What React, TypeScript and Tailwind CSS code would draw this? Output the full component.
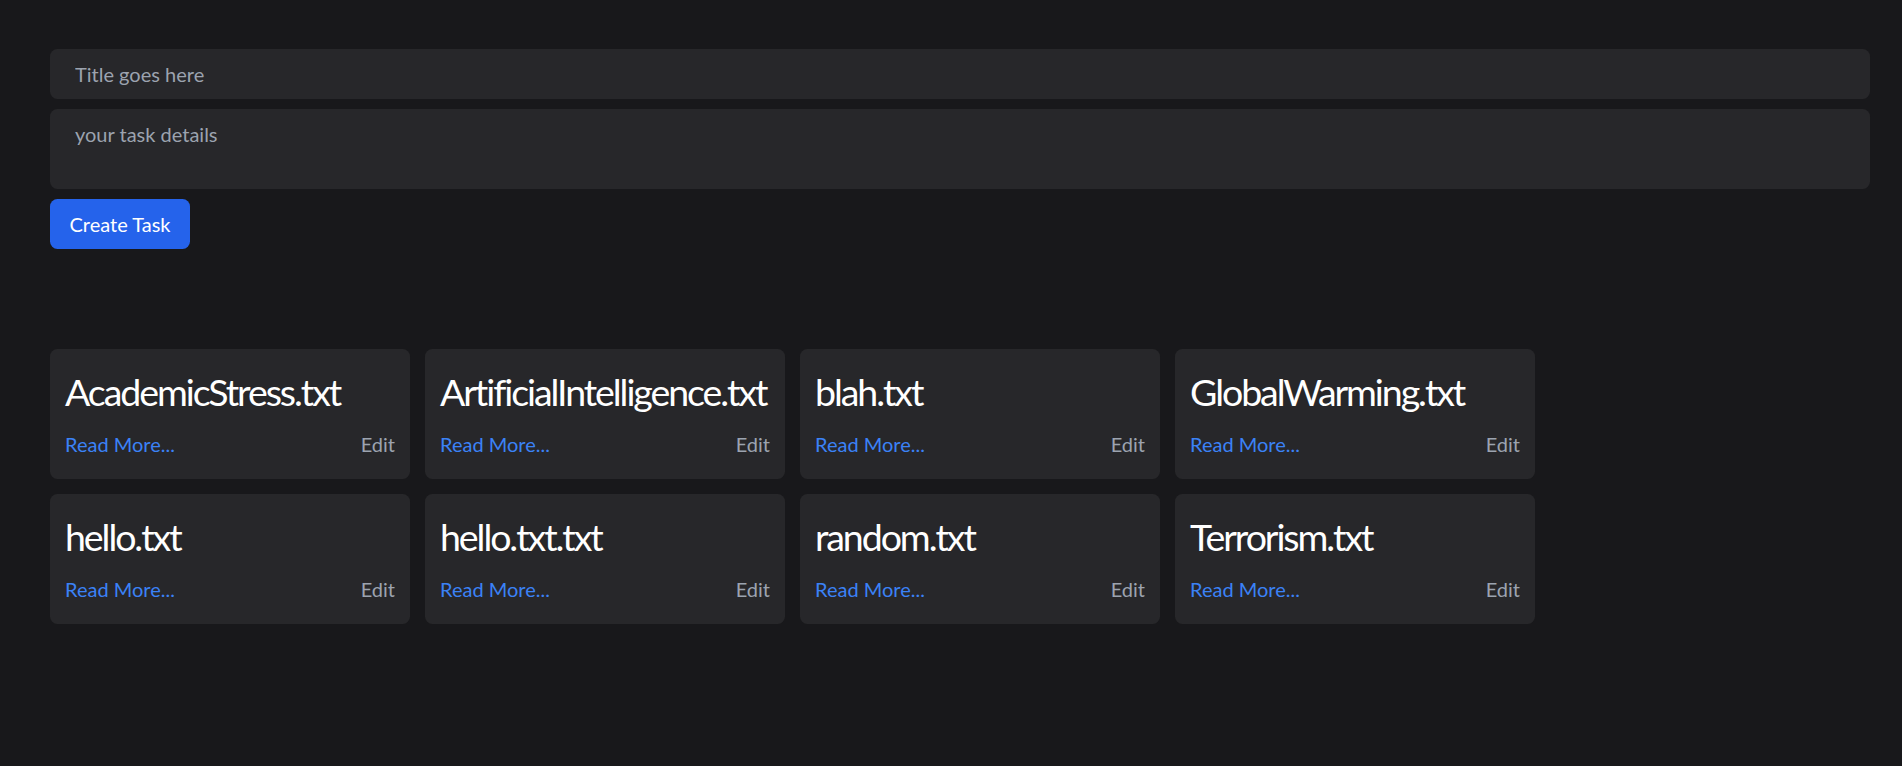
import React from "react";

type Task = {
  id: number;
  title: string;
};

const tasks: Task[] = [
  { id: 1, title: "AcademicStress.txt" },
  { id: 2, title: "ArtificialIntelligence.txt" },
  { id: 3, title: "blah.txt" },
  { id: 4, title: "GlobalWarming.txt" },
  { id: 5, title: "hello.txt" },
  { id: 6, title: "hello.txt.txt" },
  { id: 7, title: "random.txt" },
  { id: 8, title: "Terrorism.txt" },
];

const TaskCard: React.FC<{ task: Task }> = ({ task }) => {
  return (
    <div className="w-[360px] rounded-[7.5px] bg-[#27272a] px-[15px] pt-[20px] pb-[20px]">
      <h1 className="text-[37.5px] leading-[45px] tracking-[-0.055em] text-white">
        {task.title}
      </h1>
      <div className="flex justify-between mt-[15px] text-[20px] leading-[30px]">
        <a href="#" className="text-[#3b82f6]">
          Read More...
        </a>
        <a href="#" className="text-[#9ca3af]">
          Edit
        </a>
      </div>
    </div>
  );
};

export default function App() {
  return (
    <div
      className="min-h-screen bg-[#18181b] pl-[50px] pr-[32px] pt-[49px] pb-10"
      style={{ fontFamily: "Lato, 'Noto Sans', sans-serif" }}
    >
      <form className="flex flex-col gap-[10px]" onSubmit={(e) => e.preventDefault()}>
        <input
          type="text"
          placeholder="Title goes here"
          className="h-[50px] w-full rounded-[7.5px] bg-[#27272a] px-[25px] text-[20px] text-white placeholder:text-[#9ca3af] outline-none"
        />
        <textarea
          placeholder="your task details"
          className="h-[80px] w-full resize-none rounded-[7.5px] bg-[#27272a] px-[25px] py-[10px] text-[20px] leading-[30px] text-white placeholder:text-[#9ca3af] outline-none"
        />
        <div>
          <button
            type="submit"
            className="h-[50px] w-[140px] rounded-[7.5px] bg-[#2563eb] text-[20px] text-white"
          >
            Create Task
          </button>
        </div>
      </form>

      <div className="mt-[100px] flex flex-wrap gap-[15px]">
        {tasks.map((task) => (
          <TaskCard key={task.id} task={task} />
        ))}
      </div>
    </div>
  );
}
